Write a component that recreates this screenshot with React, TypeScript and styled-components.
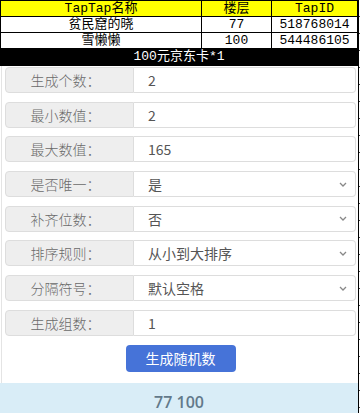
import React from 'react';
import styled, { createGlobalStyle } from 'styled-components';

const GlobalStyle = createGlobalStyle`
  html, body {
    margin: 0;
    padding: 0;
    background-color: #fff;
    background-image: repeating-linear-gradient(to bottom, transparent 0, transparent 16px, #444 16px, #444 17px);
  }
  body {
    font-family: "Noto Sans CJK SC", "Liberation Sans", sans-serif;
    overflow: hidden;
  }
`;

const Page = styled.div`
  width: 358px;
  height: 413px;
  background: #fff;
  border-right: 1px solid #000;
  overflow: hidden;
`;

const Sheet = styled.table`
  width: 100%;
  border-collapse: collapse;
  table-layout: fixed;
  font-family: "Liberation Mono", "Noto Sans CJK SC", monospace;
  font-size: 13px;
  color: #000;
`;

const Cell = styled.td<{ $head?: boolean }>`
  height: 15px;
  padding: 0;
  line-height: 15px;
  text-align: center;
  border: 1px solid #000;
  background: ${p => (p.$head ? '#ffff00' : '#fff')};
  white-space: nowrap;
  overflow: hidden;
`;

const PrizeCell = styled.td`
  height: 16px;
  padding: 0;
  line-height: 16px;
  text-align: center;
  background: #000;
  color: #fff;
  border: 1px solid #000;
`;

const Form = styled.div`
  display: flex;
  flex-direction: column;
  gap: 8.7px;
  padding: 1px 2px 0 3px;
  border-left: 1px solid #e4e4e4;
  margin-left: 1px;
`;

const Row = styled.div`
  display: flex;
  height: 26px;
  font-size: 14px;
  color: #555;
`;

const Label = styled.div`
  width: 129px;
  flex: none;
  display: flex;
  align-items: center;
  justify-content: center;
  padding-right: 8px;
  box-sizing: border-box;
  background: #eee;
  border: 1px solid #ddd;
  border-radius: 4px 0 0 4px;
  color: #6a6a6a;
  font-weight: 300;
`;

const Field = styled.div`
  flex: 1;
  display: flex;
  align-items: center;
  justify-content: space-between;
  padding: 0 8px 0 14px;
  background: #fff;
  border: 1px solid #ddd;
  border-left: none;
  border-radius: 0 4px 4px 0;
  color: #555;
`;

const Chevron = styled.svg`
  width: 8px;
  height: 5px;
`;

const ButtonRow = styled.div`
  display: flex;
  justify-content: center;
  padding: 0 0 11px;
`;

const Button = styled.button`
  width: 110px;
  height: 27px;
  border: none;
  border-radius: 4px;
  background: #4673d8;
  color: #fff;
  font-family: "Noto Sans CJK SC", sans-serif;
  font-size: 14px;
  padding: 0;
`;

const Result = styled.div`
  height: 46px;
  padding-top: 8px;
  box-sizing: border-box;
  background: #d9edf7;
  text-align: center;
  font-family: "Open Sans", "Liberation Sans", sans-serif;
  font-size: 16px;
  font-weight: 600;
  color: #62798a;
`;

const rows = [
  { label: '生成个数：', value: '2' },
  { label: '最小数值：', value: '2' },
  { label: '最大数值：', value: '165' },
  { label: '是否唯一：', value: '是', select: true },
  { label: '补齐位数：', value: '否', select: true },
  { label: '排序规则：', value: '从小到大排序', select: true },
  { label: '分隔符号：', value: '默认空格', select: true },
  { label: '生成组数：', value: '1' },
];

const App: React.FC = () => (
  <Page>
    <GlobalStyle />
    <Sheet>
      <colgroup>
        <col style={{ width: 201 }} />
        <col style={{ width: 70 }} />
        <col />
      </colgroup>
      <tbody>
        <tr>
          <Cell $head>TapTap名称</Cell>
          <Cell $head>楼层</Cell>
          <Cell $head>TapID</Cell>
        </tr>
        <tr>
          <Cell>贫民窟的晓</Cell>
          <Cell>77</Cell>
          <Cell>518768014</Cell>
        </tr>
        <tr>
          <Cell>雪懒懒</Cell>
          <Cell>100</Cell>
          <Cell>544486105</Cell>
        </tr>
        <tr>
          <PrizeCell colSpan={3}>100元京东卡*1</PrizeCell>
        </tr>
      </tbody>
    </Sheet>
    <Form>
      {rows.map(r => (
        <Row key={r.label}>
          <Label>{r.label}</Label>
          <Field>
            <span>{r.value}</span>
            {r.select && (
              <Chevron viewBox="0 0 8 5">
                <path d="M1 1l3 3 3-3" fill="none" stroke="#888" strokeWidth="1.3" />
              </Chevron>
            )}
          </Field>
        </Row>
      ))}
      <ButtonRow>
        <Button>生成随机数</Button>
      </ButtonRow>
    </Form>
    <Result>77 100</Result>
  </Page>
);

export default App;
